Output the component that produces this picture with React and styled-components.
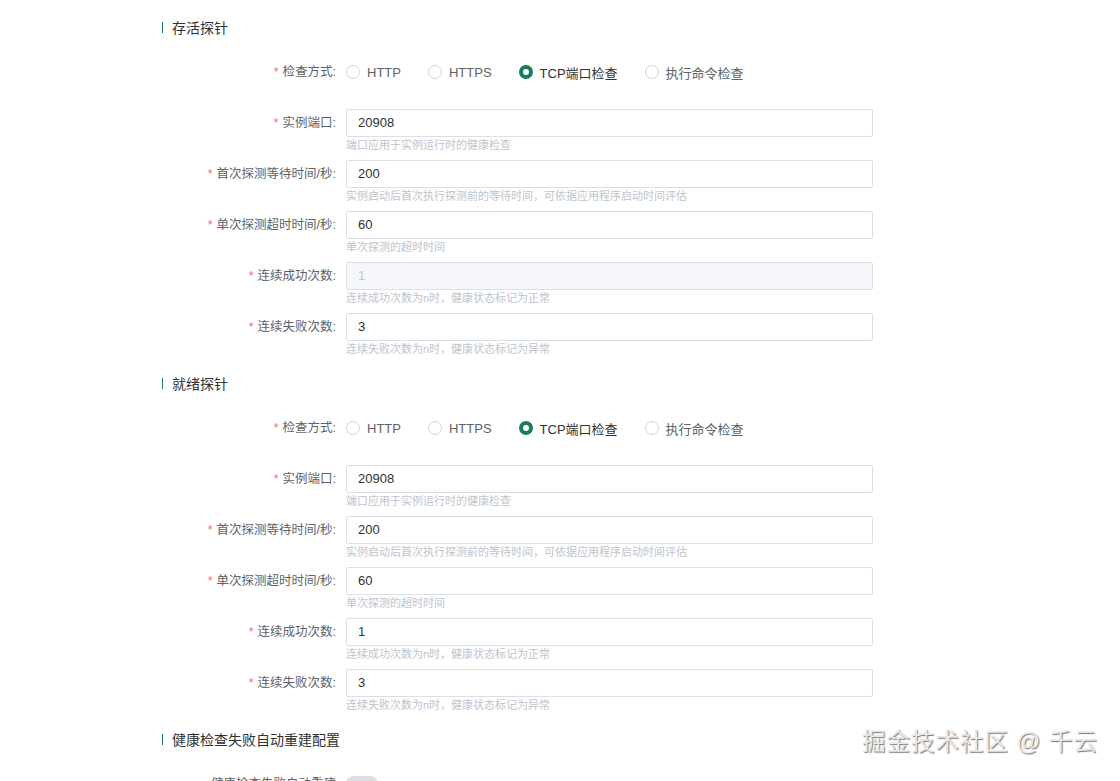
import styled, { createGlobalStyle } from "styled-components";

const GlobalStyle = createGlobalStyle`
  body {
    margin: 0;
    background: #fff;
    font-family: "Liberation Sans", "Noto Sans CJK SC", sans-serif;
    color: #606266;
  }
`;

const Page = styled.div`
  position: relative;
  height: 781px;
  overflow: hidden;
  padding: 17px 0 0 162px;
  box-sizing: border-box;
`;

const SectionTitle = styled.div`
  display: flex;
  align-items: center;
  height: 20px;
  font-size: 14px;
  color: #303133;
  margin-bottom: 25px;

  &::before {
    content: "";
    width: 1px;
    height: 11px;
    background: #1b7d5d;
    margin-right: 9px;
  }
`;

const Section = styled.section`
  margin-bottom: 16px;
`;

const FormItem = styled.div`
  display: grid;
  grid-template-columns: 184px 527px;
  align-items: start;
  margin-bottom: ${(p) => (p.$radio ? "27px" : "7px")};
`;

const Label = styled.label`
  text-align: right;
  padding-right: 10px;
  font-size: 12.5px;
  line-height: ${(p) => (p.$tall ? "28px" : "20px")};
  color: #606266;

  em {
    font-style: normal;
    color: #f56c6c;
    margin-right: 4px;
  }
`;

const Input = styled.div`
  height: 28px;
  box-sizing: border-box;
  border: 1px solid #dcdfe6;
  border-radius: 2px;
  padding-left: 11px;
  font-size: 13px;
  line-height: 26px;
  color: ${(p) => (p.$disabled ? "#c0c4cc" : "#303133")};
  background: ${(p) => (p.$disabled ? "#f5f7fa" : "#fff")};
`;

const Help = styled.div`
  font-size: 11px;
  line-height: 16px;
  color: #c0c4cc;
`;

const RadioGroup = styled.div`
  display: flex;
  align-items: center;
  height: 20px;
`;

const Radio = styled.span`
  display: flex;
  align-items: center;
  margin-right: 27px;
  font-size: 13px;
  color: ${(p) => (p.$checked ? "#303133" : "#606266")};

  &::before {
    content: "";
    box-sizing: border-box;
    width: 14px;
    height: 14px;
    border-radius: 50%;
    margin-right: 7px;
    border: ${(p) => (p.$checked ? "4px solid #1b7d5d" : "1px solid #d3d6dc")};
    background: #fff;
  }
`;

const Switch = styled.span`
  display: block;
  width: 32px;
  height: 16px;
  margin-top: 2px;
  border-radius: 8px;
  background: #dcdfe6;
`;

const Watermark = styled.div`
  position: absolute;
  right: 22px;
  bottom: 24px;
  font-size: 23.5px;
  letter-spacing: 1px;
  color: #e8e8e8;
  text-shadow: 1px 1px 1px #777, -1px -1px 0 #fff;
`;

const checks = ["HTTP", "HTTPS", "TCP端口检查", "执行命令检查"];

const fields = [
  { label: "实例端口", value: "20908", help: "端口应用于实例运行时的健康检查" },
  {
    label: "首次探测等待时间/秒",
    value: "200",
    help: "实例启动后首次执行探测前的等待时间，可依据应用程序启动时间评估",
  },
  { label: "单次探测超时时间/秒", value: "60", help: "单次探测的超时时间" },
  { label: "连续成功次数", value: "1", help: "连续成功次数为n时，健康状态标记为正常", lock: true },
  { label: "连续失败次数", value: "3", help: "连续失败次数为n时，健康状态标记为异常" },
];

function Probe({ title, lockSuccess }) {
  return (
    <Section>
      <SectionTitle>{title}</SectionTitle>
      <FormItem $radio>
        <Label>
          <em>*</em>检查方式:
        </Label>
        <RadioGroup>
          {checks.map((c) => (
            <Radio key={c} $checked={c === "TCP端口检查"}>
              {c}
            </Radio>
          ))}
        </RadioGroup>
      </FormItem>
      {fields.map((f) => (
        <FormItem key={f.label}>
          <Label $tall>
            <em>*</em>
            {f.label}:
          </Label>
          <div>
            <Input $disabled={f.lock && lockSuccess}>{f.value}</Input>
            <Help>{f.help}</Help>
          </div>
        </FormItem>
      ))}
    </Section>
  );
}

export default function App() {
  return (
    <>
      <GlobalStyle />
      <Page>
        <Probe title="存活探针" lockSuccess />
        <Probe title="就绪探针" />
        <SectionTitle>健康检查失败自动重建配置</SectionTitle>
        <FormItem>
          <Label>健康检查失败自动重建</Label>
          <Switch />
        </FormItem>
        <Watermark>掘金技术社区 @ 千云</Watermark>
      </Page>
    </>
  );
}
